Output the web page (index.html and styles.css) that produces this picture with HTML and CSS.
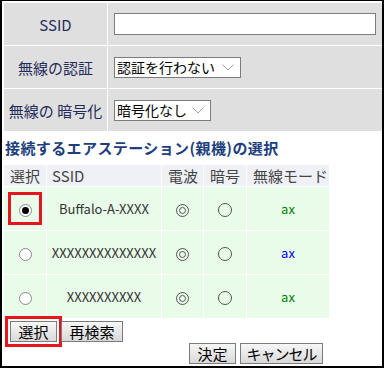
FILE: index.html
```html
<!DOCTYPE html>
<html lang="ja">
<head>
  <meta charset="UTF-8" />
  <meta name="viewport" content="width=device-width, initial-scale=1.0"/>
  <title>無線設定</title>
  <link rel="stylesheet" href="styles.css">
</head>
<body>
<div class="frame">
  <div class="settings">
    <div class="label">SSID</div>
    <div class="value"><span class="text-input"></span></div>
    <div class="label">無線の認証</div>
    <div class="value">
      <span class="select select-auth">認証を行わない
        <svg class="chevron" width="12" height="7" viewBox="0 0 12 7"><path d="M0.5 0.5 L6 6 L11.5 0.5" fill="none" stroke="#a0a0a0" stroke-width="1"/></svg>
      </span>
    </div>
    <div class="label">無線の 暗号化</div>
    <div class="value">
      <span class="select select-enc">暗号化なし
        <svg class="chevron" width="12" height="7" viewBox="0 0 12 7"><path d="M0.5 0.5 L6 6 L11.5 0.5" fill="none" stroke="#a0a0a0" stroke-width="1"/></svg>
      </span>
    </div>
  </div>

  <h2 class="section-title">接続するエアステーション(親機)の選択</h2>

  <table class="ap-list">
    <tr class="head">
      <th class="c-sel">選択</th>
      <th class="c-ssid">SSID</th>
      <th class="c-sig">電波</th>
      <th class="c-enc">暗号</th>
      <th class="c-mode">無線モード</th>
    </tr>
    <tr>
      <td class="marked"><span class="radio checked"></span><span class="mark-box"></span></td>
      <td>Buffalo-A-XXXX</td>
      <td><svg class="sym" width="13" height="13" viewBox="0 0 13 13"><circle cx="6.5" cy="6.5" r="6" fill="none" stroke="#555"/><circle cx="6.5" cy="6.5" r="3" fill="none" stroke="#555"/></svg></td>
      <td><svg class="sym" width="14" height="14" viewBox="0 0 14 14"><circle cx="7" cy="7" r="6.5" fill="none" stroke="#555"/></svg></td>
      <td class="mode green">ax</td>
    </tr>
    <tr>
      <td><span class="radio"></span></td>
      <td>XXXXXXXXXXXXXX</td>
      <td><svg class="sym" width="13" height="13" viewBox="0 0 13 13"><circle cx="6.5" cy="6.5" r="6" fill="none" stroke="#555"/><circle cx="6.5" cy="6.5" r="3" fill="none" stroke="#555"/></svg></td>
      <td><svg class="sym" width="14" height="14" viewBox="0 0 14 14"><circle cx="7" cy="7" r="6.5" fill="none" stroke="#555"/></svg></td>
      <td class="mode blue">ax</td>
    </tr>
    <tr>
      <td><span class="radio"></span></td>
      <td>XXXXXXXXXX</td>
      <td><svg class="sym" width="13" height="13" viewBox="0 0 13 13"><circle cx="6.5" cy="6.5" r="6" fill="none" stroke="#555"/><circle cx="6.5" cy="6.5" r="3" fill="none" stroke="#555"/></svg></td>
      <td><svg class="sym" width="14" height="14" viewBox="0 0 14 14"><circle cx="7" cy="7" r="6.5" fill="none" stroke="#555"/></svg></td>
      <td class="mode green">ax</td>
    </tr>
  </table>

  <div class="actions">
    <button class="btn btn-select marked-btn">選択</button>
    <button class="btn btn-search">再検索</button>
  </div>
  <div class="submit">
    <button class="btn btn-ok">決定</button>
    <button class="btn btn-cancel">キャンセル</button>
  </div>
</div>
</body>
</html>
```

FILE: styles.css
```css
body { margin:0; background:#fff; font-family:"Noto Sans CJK JP", "Noto Sans", sans-serif; }
.frame { width:384px; height:368px; box-sizing:border-box; border:2px solid #000; border-top-width:1px; padding:2px 0 0 2px; }

.settings { display:grid; grid-template-columns:103px 1fr; grid-auto-rows:42px; gap:1px; background:#fff; }
.settings .label { background:#dfdfdf; color:#1f2b58; font-size:15px; display:flex; align-items:center; justify-content:center; white-space:pre; }
.settings .value { background:#dfdfdf; display:flex; align-items:center; padding-left:6px; }
.text-input { display:block; width:262px; height:22px; box-sizing:border-box; background:#fff; border:1px solid #7c7c7c; }
.select { display:flex; align-items:center; justify-content:space-between; height:21px; box-sizing:border-box; background:#fff; border:1px solid #7c7c7c; font-size:14px; color:#000; padding:0 6px 0 2px; }
.select-auth { width:127px; }
.select-enc { width:97px; }
.chevron { margin-top:1px; }

.section-title { margin:0; height:33px; line-height:33px; font-size:15px; font-weight:bold; color:#203f7c; padding-left:1px; letter-spacing:0.4px; }

.ap-list { border-spacing:1px; margin-left:-1px; font-size:13px; color:#333; }
.ap-list th { background:#eff1f6; height:21px; padding:0 0 0 6px; text-align:left; font-weight:normal; font-size:15px; color:#444; }
.ap-list .c-sel { width:36px; }
.ap-list .c-ssid { width:109px; padding-left:5px; }
.ap-list .c-sig { width:35px; }
.ap-list .c-enc { width:36px; }
.ap-list .c-mode { width:76px; }
.ap-list td { background:#e9fbe9; height:43px; padding:0; text-align:center; }
.ap-list .sym { display:inline-block; vertical-align:middle; }
.ap-list td.mode { font-size:13px; }
.green { color:#008000; }
.blue { color:#0000ff; }

.radio { display:inline-block; width:13px; height:13px; box-sizing:border-box; border:1px solid #8a8a8a; border-radius:50%; background:#fff; vertical-align:middle; position:relative; }
.radio.checked::after { content:""; position:absolute; left:2px; top:2px; width:7px; height:7px; border-radius:50%; background:#000; }
.marked { position:relative; }
.mark-box { position:absolute; left:4px; right:4px; top:5px; bottom:5px; border:3px solid #e6161e; }

.btn { font-family:inherit; font-size:15px; color:#000; height:21px; box-sizing:border-box; padding:0; line-height:19px; border:1px solid #7b7b7b; background:linear-gradient(#f7f7f7, #d9d9d9); }
.actions { display:flex; gap:4px; padding-left:6px; margin-top:2px; }
.btn-select { width:47px; }
.btn-search { width:62px; }
.marked-btn { outline:3px solid #e6161e; outline-offset:2px; }
.submit { display:flex; gap:4px; padding-left:185px; margin-top:1px; }
.btn-ok { width:47px; }
.btn-cancel { width:83px; letter-spacing:-1px; }
```
